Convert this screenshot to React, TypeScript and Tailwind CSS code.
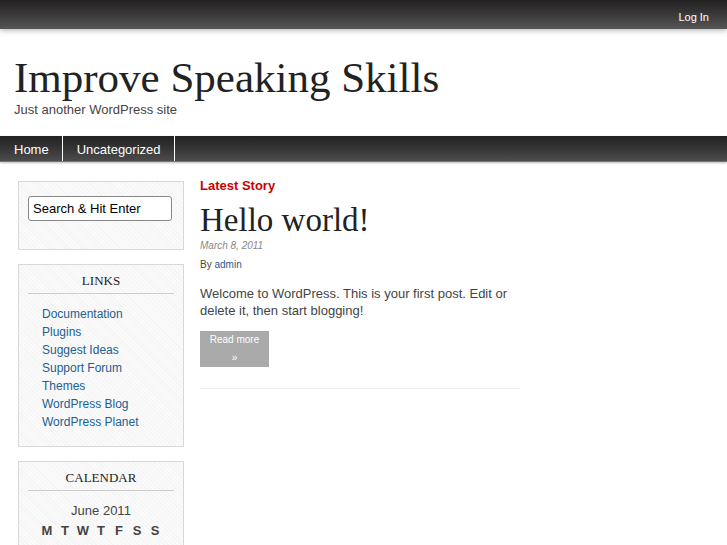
import type { ReactNode } from "react";

const links = [
  "Documentation",
  "Plugins",
  "Suggest Ideas",
  "Support Forum",
  "Themes",
  "WordPress Blog",
  "WordPress Planet",
];

const days = ["M", "T", "W", "T", "F", "S", "S"];

function Widget({ title, children }: { title?: string; children: ReactNode }) {
  return (
    <section className="border border-[#d8d8d8] bg-[#f8f8f8] bg-[repeating-linear-gradient(45deg,#f4f4f4_0px,#f4f4f4_1px,#fafafa_1px,#fafafa_3px)] px-[9px]">
      {title && (
        <h3 className="mt-2 border-b border-[#cccccc] pb-1 text-center font-['Liberation_Serif',serif] text-[13px] leading-4 text-[#222222]">
          {title}
        </h3>
      )}
      {children}
    </section>
  );
}

export default function App() {
  return (
    <div className="bg-white font-['Liberation_Sans',Arial,sans-serif] text-[13px] text-[#444444]">
      <div className="flex h-[29px] items-center justify-end bg-linear-to-b from-[#222021] to-[#565657] px-[18px] pt-1 shadow-[0_1px_6px_#aaaaaa]">
        <a href="#login" className="text-[11px] leading-4 text-white">
          Log In
        </a>
      </div>

      <header className="h-[107px] px-[14px] pt-6">
        <h1 className="font-['Liberation_Serif',serif] text-[43px] leading-[49px] text-[#222222]">
          Improve Speaking Skills
        </h1>
        <p className="leading-4">Just another WordPress site</p>
      </header>

      <nav className="flex h-[26px] border-b border-[#777777] bg-linear-to-b from-[#222021] to-[#4c4c4d] leading-[27px] text-white shadow-[0_1px_2px_#bbbbbb]">
        <a href="#home" className="border-r border-white pr-[13px] pl-[14px]">
          Home
        </a>
        <a href="#uncategorized" className="border-r border-white pr-[13px] pl-[14px]">
          Uncategorized
        </a>
      </nav>

      <div className="flex gap-4 px-[18px] pt-4">
        <aside className="flex h-[367px] w-[166px] shrink-0 flex-col gap-[14px] overflow-hidden pt-[3px]">
          <Widget>
            <form className="pt-[14px] pb-7">
              <input
                type="text"
                aria-label="Search"
                defaultValue="Search & Hit Enter"
                className="block h-[25px] w-[144px] rounded-[3px] border border-[#888888] bg-white px-1 text-[13px] text-black"
              />
            </form>
          </Widget>

          <Widget title="LINKS">
            <ul className="pt-[11px] pb-[15px] pl-[14px] text-[12px] leading-[18px]">
              {links.map((name) => (
                <li key={name}>
                  <a href="#links" className="text-[#225e90]">
                    {name}
                  </a>
                </li>
              ))}
            </ul>
          </Widget>

          <Widget title="CALENDAR">
            <table className="mx-auto mt-[10px] mb-3 text-center leading-5">
              <caption>June 2011</caption>
              <thead>
                <tr>
                  {days.map((day, i) => (
                    <th key={i} className="w-[18px] p-0 font-bold">
                      {day}
                    </th>
                  ))}
                </tr>
              </thead>
            </table>
          </Widget>
        </aside>

        <main className="w-[320px]">
          <h2 className="leading-4 font-bold text-[#cc0000]">Latest Story</h2>
          <article className="border-b border-[#eeeeee] pb-[21px]">
            <h2 className="mt-2 font-['Liberation_Serif',serif] text-[33px] leading-9 text-[#222222]">
              Hello world!
            </h2>
            <p className="text-[10px] leading-4 text-[#888888] italic">March 8, 2011</p>
            <p className="mt-[3px] text-[10px] leading-4">
              By{" "}
              <a href="#admin" className="text-[#225e90]">
                admin
              </a>
            </p>
            <p className="mt-3 leading-[17px]">
              Welcome to WordPress. This is your first post. Edit or delete it, then start
              blogging!
            </p>
            <a
              href="#more"
              className="mt-3 block w-[69px] bg-[#aaaaaa] px-2 text-center text-[10px] leading-[18px] text-white"
            >
              Read more »
            </a>
          </article>
        </main>
      </div>
    </div>
  );
}
